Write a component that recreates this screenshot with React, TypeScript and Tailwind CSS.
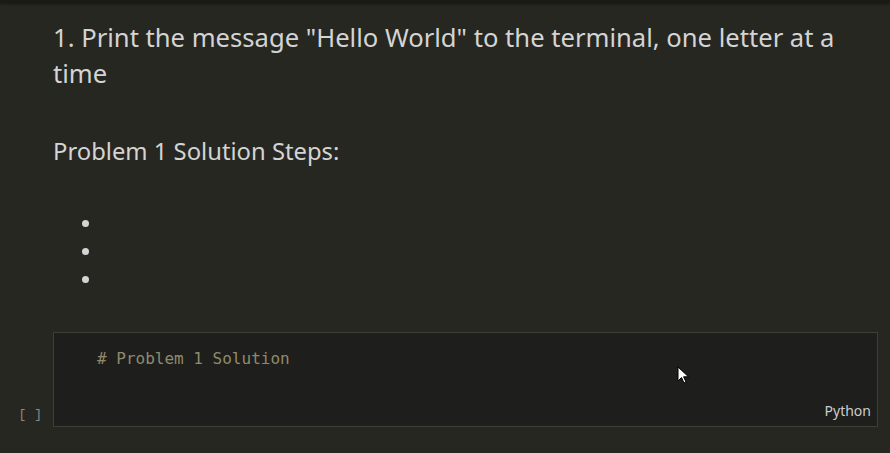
import React from 'react';

export default function App() {
  return (
    <div className="relative w-[890px] h-[453px] overflow-hidden bg-[#272722] text-[#d4d4d4] font-['Noto_Sans',sans-serif]">
      <div className="h-[3px] bg-[#1a1a17] shadow-[0_1px_3px_rgba(0,0,0,0.5)]" />

      <div className="pl-[53px] pt-[17px]">
        <p className="w-[810px] text-[25.6px] leading-[36px]">
          1. Print the message "Hello World" to the terminal, one letter at a time
        </p>
        <p className="mt-[41px] text-[23.8px] leading-[36px]">Problem 1 Solution Steps:</p>
        <ul className="mt-[40px] flex flex-col">
          {[0, 1, 2].map((i) => (
            <li key={i} className="h-[28px] flex items-center pl-[29px]">
              <span className="w-[7px] h-[7px] rounded-full bg-[#d4d4d4]" />
            </li>
          ))}
        </ul>
      </div>

      <div className="mt-[39px] flex">
        <div className="w-[53px] flex items-end justify-end pb-[3px] pr-[11px] font-['Liberation_Mono',monospace] text-[13px] text-[#8a8a86]">
          [ ]
        </div>
        <div className="w-[825px] h-[95px] border border-[#3e3e38] bg-[#1e1e1c] flex flex-col justify-between">
          <div className="pl-[43px] pt-[15px] font-['DejaVu_Sans_Mono',monospace] text-[16px] leading-[22px] text-[#908a6c]">
            # Problem 1 Solution
          </div>
          <div className="self-end pr-[6px] pb-[5px] text-[14px] text-[#cccccc]">Python</div>
        </div>
      </div>

      <svg className="absolute left-[677px] top-[366px]" width="14" height="20" viewBox="0 0 14 20">
        <path d="M1 1 L1 15 L4.5 11.5 L7 17 L9 16 L6.6 10.8 L11.5 10.8 Z" fill="#ffffff" stroke="#000000" strokeWidth="1" />
      </svg>
    </div>
  );
}
